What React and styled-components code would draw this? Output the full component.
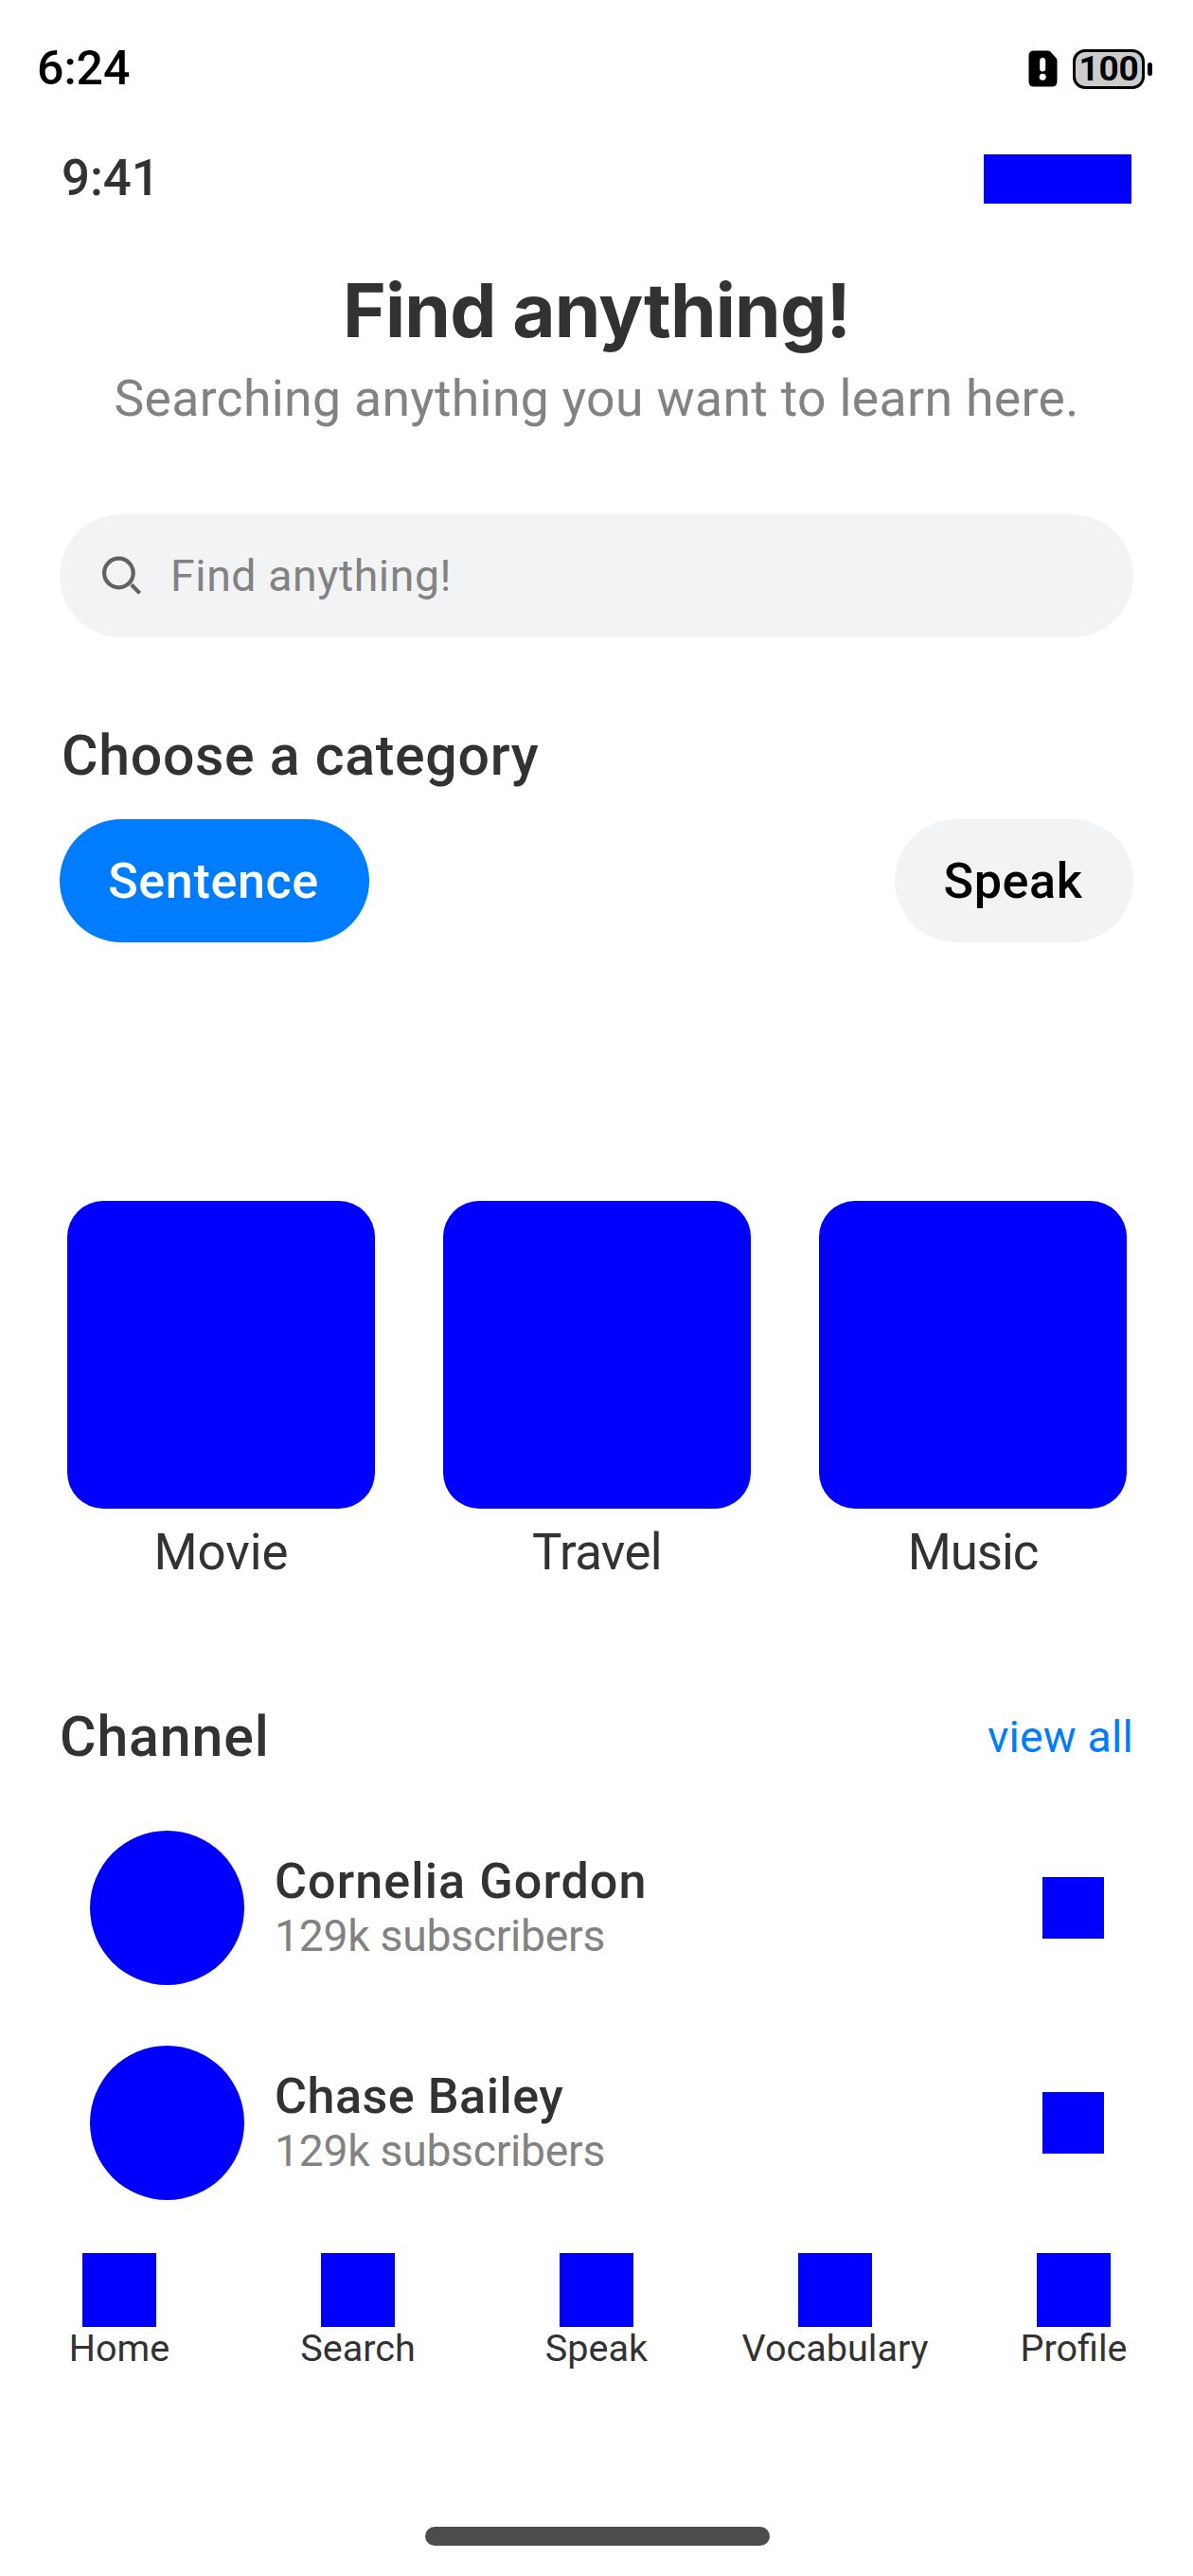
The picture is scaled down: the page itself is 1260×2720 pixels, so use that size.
import React from 'react';
import styled, { createGlobalStyle } from 'styled-components';

const BLUE = '#0000ff';
const INK = '#323232';
const MUTED = '#828282';
const ACCENT = '#007dff';
const SURFACE = '#f1f3f5';
const MEDIUM = 500;

const GlobalStyle = createGlobalStyle`
  * { box-sizing: border-box; }
  body { margin: 0; background: #fff; font-family: Roboto, "Liberation Sans", sans-serif; }
  button { border: 0; padding: 0; font-family: inherit; }
`;

const Page = styled.div`
  width: 1260px;
  height: 2720px;
  display: flex;
  flex-direction: column;
  overflow: hidden;
  background: #fff;
  color: ${INK};
`;

const Text = styled.span`
  white-space: nowrap;
  letter-spacing: ${(p) => p.$track || 0}px;
`;

const StatusBar = styled.header`
  height: 144px;
  padding: 0 43px 0 39px;
  display: flex;
  align-items: center;
  justify-content: space-between;
  color: #000;
`;

const StatusTime = styled(Text)`
  font-size: 50px;
  font-weight: 500;
  line-height: 60px;
`;

const StatusIcons = styled.div`
  display: flex;
  align-items: center;
  gap: 16px;
  padding-top: 1px;
`;

const Battery = styled.div`
  display: flex;
  align-items: center;
  gap: 3px;
`;

const BatteryBody = styled.div`
  width: 76px;
  height: 42px;
  border: 3px solid #000;
  border-radius: 13px;
  background: #ccc;
  display: flex;
  align-items: center;
  justify-content: center;
  font-size: 37px;
  font-weight: 700;
  line-height: 35px;
  letter-spacing: -0.3px;
`;

const BatteryCap = styled.div`
  width: 5px;
  height: 14px;
  border-radius: 3px;
  background: #000;
`;

const TopRow = styled.div`
  height: 89px;
  padding: 0 65px;
  display: flex;
  align-items: center;
  justify-content: space-between;
`;

const Clock = styled(Text)`
  padding-bottom: 2px;
  font-size: 52.8px;
  font-weight: ${MEDIUM};
  line-height: 62px;
`;

const Indicator = styled.div`
  width: 156px;
  height: 52px;
  background: ${BLUE};
`;

const Hero = styled.section`
  margin-top: 50px;
  display: flex;
  flex-direction: column;
  align-items: center;
  gap: 17px;
`;

const Title = styled.h1`
  margin: 0;
  font-family: Inter, Roboto, sans-serif;
  font-size: 78.1px;
  font-weight: 700;
  line-height: 90px;
  letter-spacing: -0.79px;
`;

const Subtitle = styled.p`
  margin: 0;
  font-size: 53.5px;
  line-height: 62px;
  letter-spacing: 0.34px;
  color: ${MUTED};
`;

const SearchBox = styled.div`
  height: 130px;
  margin: 91px 63px 0;
  padding-left: 43px;
  border-radius: 65px;
  background: ${SURFACE};
  display: flex;
  align-items: center;
  gap: 28px;
`;

const Placeholder = styled(Text)`
  font-size: 46.4px;
  color: ${MUTED};
`;

const SectionHead = styled.div`
  height: 70px;
  margin-top: ${(p) => p.$top}px;
  padding: 0 63px 0 ${(p) => p.$left}px;
  display: flex;
  align-items: center;
  justify-content: space-between;
`;

const SectionTitle = styled(Text)`
  font-size: 59px;
  font-weight: ${MEDIUM};
  line-height: 70px;
`;

const ViewAll = styled(Text)`
  font-size: 46.4px;
  color: ${ACCENT};
`;

const Pills = styled.div`
  margin: 32px 63px 0;
  display: flex;
  justify-content: space-between;
`;

const Pill = styled.button`
  width: ${(p) => p.$width}px;
  height: 130px;
  padding-right: 2px;
  border-radius: 65px;
  font-size: 52.1px;
  font-weight: ${MEDIUM};
  letter-spacing: 0.6px;
  background: ${(p) => (p.$active ? ACCENT : SURFACE)};
  color: ${(p) => (p.$active ? '#fff' : '#000')};
`;

const Tiles = styled.div`
  margin: 273px 34px 0 35px;
  display: grid;
  grid-template-columns: repeat(3, 397px);
`;

const Tile = styled.div`
  display: flex;
  flex-direction: column;
  align-items: center;
  gap: 15px;
`;

const TileImage = styled.div`
  width: 325px;
  height: 325px;
  border-radius: 38px;
  background: ${BLUE};
`;

const TileLabel = styled(Text)`
  font-size: 52.8px;
  line-height: 62px;
`;

const Channels = styled.div`
  margin-top: 63px;
  display: flex;
  flex-direction: column;
  gap: 63px;
`;

const Channel = styled.div`
  height: 164px;
  padding: 0 94px 0 95px;
  display: flex;
  align-items: center;
`;

const Avatar = styled.div`
  width: 163px;
  height: 163px;
  border-radius: 50%;
  background: ${BLUE};
`;

const ChannelInfo = styled.div`
  flex: 1;
  margin-left: 32px;
  padding-bottom: 1px;
  display: flex;
  flex-direction: column;
`;

const ChannelName = styled(Text)`
  font-size: 52.1px;
  font-weight: ${MEDIUM};
  line-height: 61px;
`;

const ChannelMeta = styled(Text)`
  font-size: 46.3px;
  line-height: 54px;
  color: ${MUTED};
`;

const ChannelAction = styled.div`
  width: 65px;
  height: 65px;
  background: ${BLUE};
`;

const TabBar = styled.nav`
  margin-top: 56px;
  display: grid;
  grid-template-columns: repeat(5, 1fr);
`;

const Tab = styled.div`
  display: flex;
  flex-direction: column;
  align-items: center;
`;

const TabIcon = styled.div`
  width: 78px;
  height: 78px;
  background: ${BLUE};
`;

const TabLabel = styled(Text)`
  font-size: 39.6px;
  line-height: 46px;
`;

const HomeIndicator = styled.div`
  width: 364px;
  height: 20px;
  margin: auto auto 32px 449px;
  border-radius: 10px;
  background: #4c4c4c;
`;

const SimAlertIcon = () => (
  <svg width="31" height="39" viewBox="0 0 31 39">
    <path d="M6 0.5H20.5Q22.3 0.5 23.6 1.8L29.3 8Q30.5 9.3 30.5 11V33Q30.5 38.5 25 38.5H6Q0.5 38.5 0.5 33V6Q0.5 0.5 6 0.5Z" fill="#000" />
    <rect x="12.2" y="8" width="6" height="14.5" rx="3" fill="#fff" />
    <circle cx="15.2" cy="28.3" r="3.5" fill="#fff" />
  </svg>
);

const SearchIcon = () => (
  <svg width="46" height="46" viewBox="0 0 46 46" fill="none" stroke="#5f6163" strokeWidth="4.2">
    <circle cx="19.4" cy="20" r="15.3" />
    <path d="M32.8 32.4L41.6 41.4" />
  </svg>
);

const tiles = [
  { label: 'Movie', track: -0.04 },
  { label: 'Travel', track: -0.68 },
  { label: 'Music', track: -1.13 },
];

const channels = [
  { name: 'Cornelia Gordon', track: 1.08 },
  { name: 'Chase Bailey', track: 0.5 },
];

const tabs = ['Home', 'Search', 'Speak', 'Vocabulary', 'Profile'];

export default function App() {
  return (
    <Page>
      <GlobalStyle />
      <StatusBar>
        <StatusTime>6:24</StatusTime>
        <StatusIcons>
          <SimAlertIcon />
          <Battery>
            <BatteryBody>100</BatteryBody>
            <BatteryCap />
          </Battery>
        </StatusIcons>
      </StatusBar>
      <TopRow>
        <Clock $track={-0.1}>9:41</Clock>
        <Indicator />
      </TopRow>
      <Hero>
        <Title>Find anything!</Title>
        <Subtitle>Searching anything you want to learn here.</Subtitle>
      </Hero>
      <SearchBox>
        <SearchIcon />
        <Placeholder $track={0.61}>Find anything!</Placeholder>
      </SearchBox>
      <SectionHead $top={90} $left={65}>
        <SectionTitle $track={0.7}>Choose a category</SectionTitle>
      </SectionHead>
      <Pills>
        <Pill $active $width={327}>Sentence</Pill>
        <Pill $width={252}>Speak</Pill>
      </Pills>
      <Tiles>
        {tiles.map((t) => (
          <Tile key={t.label}>
            <TileImage />
            <TileLabel $track={t.track}>{t.label}</TileLabel>
          </Tile>
        ))}
      </Tiles>
      <SectionHead $top={129} $left={63}>
        <SectionTitle $track={0.9}>Channel</SectionTitle>
        <ViewAll $track={0.19}>view all</ViewAll>
      </SectionHead>
      <Channels>
        {channels.map((c) => (
          <Channel key={c.name}>
            <Avatar />
            <ChannelInfo>
              <ChannelName $track={c.track}>{c.name}</ChannelName>
              <ChannelMeta $track={-0.29}>129k subscribers</ChannelMeta>
            </ChannelInfo>
            <ChannelAction />
          </Channel>
        ))}
      </Channels>
      <TabBar>
        {tabs.map((t) => (
          <Tab key={t}>
            <TabIcon />
            <TabLabel>{t}</TabLabel>
          </Tab>
        ))}
      </TabBar>
      <HomeIndicator />
    </Page>
  );
}
